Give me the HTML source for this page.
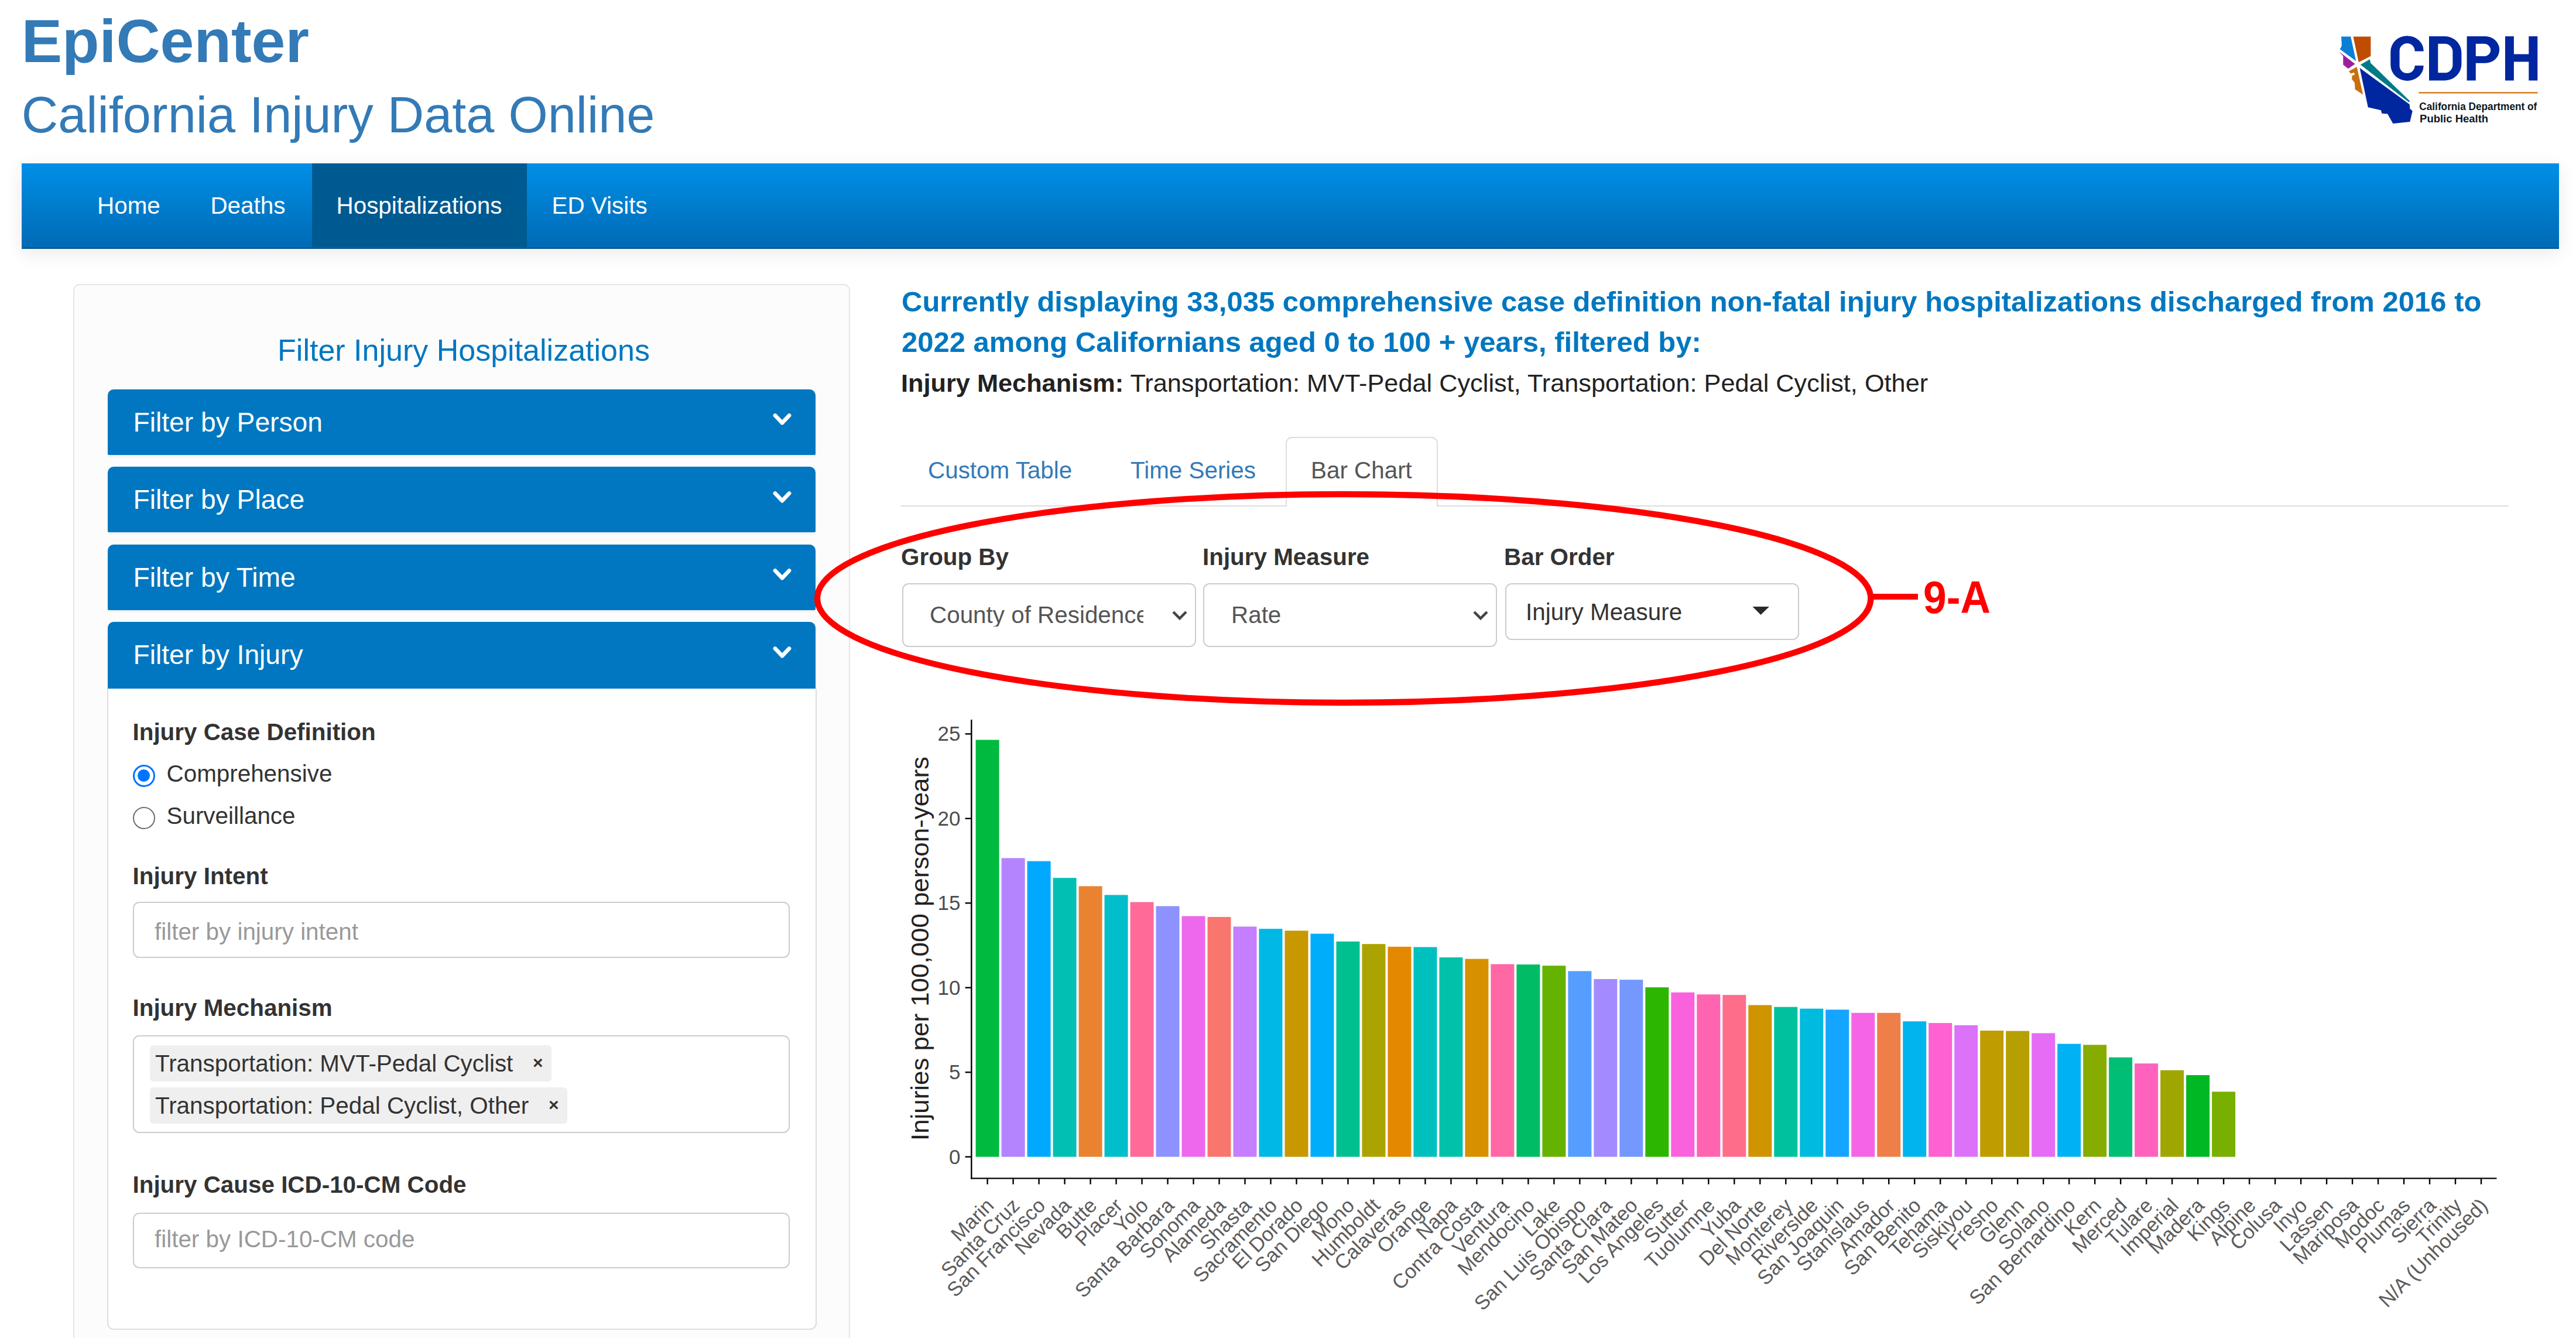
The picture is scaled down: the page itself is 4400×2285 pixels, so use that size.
<!DOCTYPE html>
<html><head><meta charset="utf-8"><title>EpiCenter</title>
<style>
html,body{margin:0;padding:0;background:#fff;width:4400px;height:2285px;overflow:hidden;position:relative;font-family:"Liberation Sans",sans-serif}
.abs{position:absolute}
.t{position:absolute;white-space:nowrap}
.navbar{background:linear-gradient(#008fe6,#006ab5);box-shadow:0 8px 30px rgba(0,0,0,.085);border-bottom:2.2px solid #00508c;box-sizing:border-box}
.ph{background:#0077c0;border-radius:10px 10px 2px 2px;box-shadow:0 3px 4px rgba(0,0,0,.06)}
.inp{background:#fff;border:2.5px solid #ccc;border-radius:11px;box-sizing:border-box}
</style></head><body>
<div class="t" style="left:36.7px;top:17.6px;font-size:104.00px;line-height:104.00px;color:#337ab7;font-weight:bold;">EpiCenter</div>
<div class="t" style="left:36.7px;top:153.0px;font-size:86.50px;line-height:86.50px;color:#337ab7;font-weight:normal;">California Injury Data Online</div>
<svg class="abs" style="left:3980px;top:50px" width="370" height="170" viewBox="3980 50 370 170">
<polygon points="3999,62.4 4015.2,62.4 4024.2,104.3 3996.7,84 3999.8,78.4 3999.5,70" fill="#0A7FD6"/>
<polygon points="4019.5,62.4 4049.4,62.4 4049.4,95.7 4028.8,106.2" fill="#BF4C00"/>
<polygon points="3995.5,88.3 4022.6,109.3 4010.9,117.3 4002.3,110.5 4002.3,95.7" fill="#9C1FA0"/>
<polygon points="4012.1,121.6 4025.7,114.2 4036.2,161.7 4022.6,152.4 4022,141.3 4017.1,135.2 4017.7,129 4022,127.8 4021,124 4015,125.5" fill="#C8700F"/>
<polygon points="4031.9,110.5 4047.9,101.3 4049.1,107.4 4116.4,172.8 4114.5,174.6" fill="#007A87"/>
<polygon points="4030.6,116.1 4115.7,178.3 4116.4,185.8 4120.7,189.5 4116.4,208 4087.4,211 4078.1,194.4 4068.3,193.8 4067,188.2 4044.8,183.3" fill="#0026A0"/>
<path fill="#0026A0" fill-rule="evenodd" d="M4139.6,87.5 L4139.6,86 A28.1,25 0 0 0 4111.5,61.2 A28.2,27 0 0 0 4083.3,88 L4083.3,111 A28.2,27 0 0 0 4111.5,137.9 A28.1,25 0 0 0 4139.6,113 L4139.6,112 L4124.6,112 A13,12.5 0 0 1 4111.6,125 A13,12.5 0 0 1 4098.6,112 L4098.6,87 A13,13 0 0 1 4111.6,73.9 A13,13 0 0 1 4124.6,87.5 Z
M4149,62.1 L4176,62.1 A28.4,28 0 0 1 4204.4,90 L4204.4,109.5 A28.4,28 0 0 1 4176,137.4 L4149,137.4 Z M4164.3,74.8 L4176,74.8 A13.4,13.4 0 0 1 4189.4,88.2 L4189.4,111 A13.4,13.4 0 0 1 4176,124.3 L4164.3,124.3 Z
M4213.6,62.1 L4245,62.1 A24.2,22.85 0 0 1 4269.2,85 A24.2,22.85 0 0 1 4245,107.8 L4228.8,107.8 L4228.8,137.4 L4213.6,137.4 Z M4228.8,74.8 L4243,74.8 A11.2,10.6 0 0 1 4254.2,85.4 A11.2,10.6 0 0 1 4243,96 L4228.8,96 Z
M4279,62.1 h14.9 v30.5 h25.4 v-30.5 h15 v75.3 h-15 v-31.8 h-25.4 v31.8 h-14.9 Z"/>
<rect x="4131.2" y="157.2" width="203.7" height="2.2" rx="1" fill="#D0700E"/>
<text x="4132.3" y="187.8" font-family="Liberation Sans" font-weight="bold" font-size="17.5" fill="#0B1722" textLength="201" lengthAdjust="spacingAndGlyphs">California Department of</text>
<text x="4133.1" y="208.6" font-family="Liberation Sans" font-weight="bold" font-size="18.5" fill="#0B1722" textLength="117" lengthAdjust="spacingAndGlyphs">Public Health</text>
</svg>
<div class="abs navbar" style="left:37.3px;top:279px;width:4333.7px;height:146.4px"></div>
<div class="abs" style="left:533px;top:279px;width:367px;height:143px;background:#005a92"></div>
<div class="t" style="left:166.0px;top:330.9px;font-size:40.40px;line-height:40.40px;color:#fff;font-weight:normal;">Home</div>
<div class="t" style="left:359.4px;top:330.9px;font-size:40.40px;line-height:40.40px;color:#fff;font-weight:normal;">Deaths</div>
<div class="t" style="left:574.5px;top:330.9px;font-size:40.40px;line-height:40.40px;color:#fff;font-weight:normal;">Hospitalizations</div>
<div class="t" style="left:942.5px;top:330.9px;font-size:40.40px;line-height:40.40px;color:#fff;font-weight:normal;">ED Visits</div>
<div class="abs" style="left:125px;top:485px;width:1323px;height:1900px;background:#fcfcfc;border:2.5px solid #e6e6e6;border-radius:11px"></div>
<div class="t" style="left:129px;width:1326px;text-align:center;top:572.3px;font-size:52px;line-height:52px;color:#0077c0">Filter Injury Hospitalizations</div>
<div class="abs ph" style="left:184px;top:664.5px;width:1209px;height:112px;"></div>
<div class="t" style="left:227.5px;top:697.5px;font-size:46.20px;line-height:46.20px;color:#fff;font-weight:normal;">Filter by Person</div>
<svg class="abs" style="left:1319px;top:704.0px" width="34" height="24" viewBox="0 0 34 24"><polyline points="5,5.5 17,18.2 29,5.5" fill="none" stroke="#fff" stroke-width="6.8" stroke-linecap="round" stroke-linejoin="round"/></svg>
<div class="abs ph" style="left:184px;top:797.0px;width:1209px;height:112px;"></div>
<div class="t" style="left:227.5px;top:830.0px;font-size:46.20px;line-height:46.20px;color:#fff;font-weight:normal;">Filter by Place</div>
<svg class="abs" style="left:1319px;top:836.5px" width="34" height="24" viewBox="0 0 34 24"><polyline points="5,5.5 17,18.2 29,5.5" fill="none" stroke="#fff" stroke-width="6.8" stroke-linecap="round" stroke-linejoin="round"/></svg>
<div class="abs ph" style="left:184px;top:929.5px;width:1209px;height:112px;"></div>
<div class="t" style="left:227.5px;top:962.5px;font-size:46.20px;line-height:46.20px;color:#fff;font-weight:normal;">Filter by Time</div>
<svg class="abs" style="left:1319px;top:969.0px" width="34" height="24" viewBox="0 0 34 24"><polyline points="5,5.5 17,18.2 29,5.5" fill="none" stroke="#fff" stroke-width="6.8" stroke-linecap="round" stroke-linejoin="round"/></svg>
<div class="abs ph" style="left:184px;top:1062.0px;width:1209px;height:117.5px;border-radius:10px 10px 0 0"></div>
<div class="t" style="left:227.5px;top:1095.0px;font-size:46.20px;line-height:46.20px;color:#fff;font-weight:normal;">Filter by Injury</div>
<svg class="abs" style="left:1319px;top:1101.5px" width="34" height="24" viewBox="0 0 34 24"><polyline points="5,5.5 17,18.2 29,5.5" fill="none" stroke="#fff" stroke-width="6.8" stroke-linecap="round" stroke-linejoin="round"/></svg>
<div class="abs" style="left:183px;top:1176px;width:1208px;height:1093px;background:#fff;border:2.5px solid #ddd;border-top:none;border-radius:0 0 11px 11px"></div>
<div class="t" style="left:226.5px;top:1230.2px;font-size:40.40px;line-height:40.40px;color:#333;font-weight:bold;">Injury Case Definition</div>
<div class="abs" style="left:226.6px;top:1305.8px;width:38px;height:38px;border-radius:50%;border:3px solid #0075ff;box-sizing:border-box;background:#fff"></div><div class="abs" style="left:235.1px;top:1314.3px;width:21px;height:21px;border-radius:50%;background:#0075ff"></div>
<div class="abs" style="left:226.6px;top:1377.8px;width:38px;height:38px;border-radius:50%;border:2.3px solid #6d6d6d;box-sizing:border-box;background:#fff"></div>
<div class="t" style="left:284.5px;top:1300.7px;font-size:40.40px;line-height:40.40px;color:#333;font-weight:normal;">Comprehensive</div>
<div class="t" style="left:284.5px;top:1372.7px;font-size:40.40px;line-height:40.40px;color:#333;font-weight:normal;">Surveillance</div>
<div class="t" style="left:226.5px;top:1475.7px;font-size:40.40px;line-height:40.40px;color:#333;font-weight:bold;">Injury Intent</div>
<div class="abs inp" style="left:227px;top:1540px;width:1122px;height:96px"></div>
<div class="t" style="left:264.0px;top:1570.7px;font-size:40.40px;line-height:40.40px;color:#999;font-weight:normal;">filter by injury intent</div>
<div class="t" style="left:226.5px;top:1700.7px;font-size:40.40px;line-height:40.40px;color:#333;font-weight:bold;">Injury Mechanism</div>
<div class="abs inp" style="left:227px;top:1768px;width:1122px;height:167px"></div>
<div class="abs" style="left:256px;top:1785px;width:686px;height:62px;background:#efefef;border-radius:6px"></div>
<div class="abs" style="left:256px;top:1857px;width:713px;height:62px;background:#efefef;border-radius:6px"></div>
<div class="t" style="left:265.0px;top:1795.7px;font-size:40.40px;line-height:40.40px;color:#333;font-weight:normal;">Transportation: MVT-Pedal Cyclist</div>
<div class="t" style="left:265.0px;top:1867.7px;font-size:40.40px;line-height:40.40px;color:#333;font-weight:normal;">Transportation: Pedal Cyclist, Other</div>
<div class="t" style="left:910.0px;top:1799.5px;font-size:30.00px;line-height:30.00px;color:#333;font-weight:bold;">×</div>
<div class="t" style="left:937.0px;top:1871.5px;font-size:30.00px;line-height:30.00px;color:#333;font-weight:bold;">×</div>
<div class="t" style="left:226.5px;top:2002.7px;font-size:40.40px;line-height:40.40px;color:#333;font-weight:bold;">Injury Cause ICD-10-CM Code</div>
<div class="abs inp" style="left:227px;top:2070.5px;width:1122px;height:95px"></div>
<div class="t" style="left:264.0px;top:2095.7px;font-size:40.40px;line-height:40.40px;color:#999;font-weight:normal;">filter by ICD-10-CM code</div>
<div class="t" style="left:1540.0px;top:490.6px;font-size:49.00px;line-height:49.00px;color:#0077c0;font-weight:bold;">Currently displaying 33,035 comprehensive case definition non-fatal injury hospitalizations discharged from 2016 to</div>
<div class="t" style="left:1540.0px;top:560.4px;font-size:49.00px;line-height:49.00px;color:#0077c0;font-weight:bold;">2022 among Californians aged 0 to 100 + years, filtered by:</div>
<div class="t" style="left:1539.0px;top:633.2px;font-size:43.30px;line-height:43.30px;color:#222;font-weight:normal;"><b>Injury Mechanism:</b> Transportation: MVT-Pedal Cyclist, Transportation: Pedal Cyclist, Other</div>
<div class="abs" style="left:1539px;top:862.5px;width:2746px;height:2.7px;background:#ddd"></div>
<div class="abs" style="left:2196px;top:746px;width:260px;height:119px;background:#fff;border:2.6px solid #ddd;border-bottom:none;border-radius:11px 11px 0 0;box-sizing:border-box"></div>
<div class="t" style="left:1585.0px;top:782.7px;font-size:40.40px;line-height:40.40px;color:#337ab7;font-weight:normal;">Custom Table</div>
<div class="t" style="left:1931.0px;top:782.7px;font-size:40.40px;line-height:40.40px;color:#337ab7;font-weight:normal;">Time Series</div>
<div class="t" style="left:2239.0px;top:782.7px;font-size:40.40px;line-height:40.40px;color:#555;font-weight:normal;">Bar Chart</div>
<div class="t" style="left:1539.0px;top:930.7px;font-size:40.40px;line-height:40.40px;color:#333;font-weight:bold;">Group By</div>
<div class="t" style="left:2054.0px;top:930.7px;font-size:40.40px;line-height:40.40px;color:#333;font-weight:bold;">Injury Measure</div>
<div class="t" style="left:2569.0px;top:930.7px;font-size:40.40px;line-height:40.40px;color:#333;font-weight:bold;">Bar Order</div>
<div class="abs inp" style="left:1541px;top:996px;width:501.5px;height:108.5px"></div>
<div class="abs inp" style="left:2055px;top:996px;width:502px;height:108.5px"></div>
<div class="abs inp" style="left:2571px;top:996px;width:502px;height:96.5px"></div>
<div class="t" style="left:1588px;top:1030px;width:365px;overflow:hidden;font-size:40.4px;line-height:40.4px;color:#555">County of Residence</div>
<div class="t" style="left:2103.0px;top:1030.3px;font-size:40.40px;line-height:40.40px;color:#555;font-weight:normal;">Rate</div>
<div class="t" style="left:2606.0px;top:1024.7px;font-size:40.40px;line-height:40.40px;color:#333;font-weight:normal;">Injury Measure</div>
<svg class="abs" style="left:2001px;top:1041px" width="28" height="20" viewBox="0 0 28 20"><polyline points="3,4 14,15 25,4" fill="none" stroke="#444" stroke-width="4.5"/></svg>
<svg class="abs" style="left:2515px;top:1041px" width="28" height="20" viewBox="0 0 28 20"><polyline points="3,4 14,15 25,4" fill="none" stroke="#444" stroke-width="4.5"/></svg>
<svg class="abs" style="left:2992px;top:1034px" width="32" height="20"><polygon points="1.5,2 30,2 15.5,16" fill="#2a2a2a"/></svg>
<svg class="abs" style="left:0;top:0" width="4400" height="2285"><rect x="1666.60" y="1263.51" width="40.0" height="712.09" fill="#00BA40"/><rect x="1710.59" y="1465.44" width="40.0" height="510.16" fill="#B484FF"/><rect x="1754.58" y="1470.64" width="40.0" height="504.96" fill="#00A9FF"/><rect x="1798.57" y="1499.24" width="40.0" height="476.36" fill="#00C0B4"/><rect x="1842.56" y="1513.39" width="40.0" height="462.21" fill="#EA8330"/><rect x="1886.55" y="1528.41" width="40.0" height="447.19" fill="#00BECA"/><rect x="1930.54" y="1540.55" width="40.0" height="435.05" fill="#FF6A98"/><rect x="1974.53" y="1547.48" width="40.0" height="428.12" fill="#8E92FF"/><rect x="2018.52" y="1564.52" width="40.0" height="411.08" fill="#ED68ED"/><rect x="2062.51" y="1565.97" width="40.0" height="409.63" fill="#F8766D"/><rect x="2106.50" y="1582.43" width="40.0" height="393.17" fill="#C47EFF"/><rect x="2150.49" y="1586.19" width="40.0" height="389.41" fill="#00B8E5"/><rect x="2194.48" y="1589.37" width="40.0" height="386.23" fill="#C89800"/><rect x="2238.47" y="1594.57" width="40.0" height="381.03" fill="#00ADFA"/><rect x="2282.46" y="1607.86" width="40.0" height="367.74" fill="#00C090"/><rect x="2326.45" y="1612.19" width="40.0" height="363.41" fill="#ABA300"/><rect x="2370.44" y="1616.81" width="40.0" height="358.79" fill="#E48800"/><rect x="2414.43" y="1617.39" width="40.0" height="358.21" fill="#00C0BF"/><rect x="2458.42" y="1635.01" width="40.0" height="340.59" fill="#00C1A9"/><rect x="2502.41" y="1637.61" width="40.0" height="337.99" fill="#D79000"/><rect x="2546.40" y="1646.57" width="40.0" height="329.03" fill="#FF67A5"/><rect x="2590.39" y="1647.14" width="40.0" height="328.46" fill="#00BD65"/><rect x="2634.38" y="1649.17" width="40.0" height="326.43" fill="#66B200"/><rect x="2678.37" y="1658.41" width="40.0" height="317.19" fill="#559EFF"/><rect x="2722.36" y="1671.99" width="40.0" height="303.61" fill="#A38BFF"/><rect x="2766.35" y="1673.14" width="40.0" height="302.46" fill="#7598FF"/><rect x="2810.34" y="1686.14" width="40.0" height="289.46" fill="#2DB600"/><rect x="2854.33" y="1694.81" width="40.0" height="280.79" fill="#F962DC"/><rect x="2898.32" y="1698.28" width="40.0" height="277.32" fill="#FF64B1"/><rect x="2942.31" y="1699.14" width="40.0" height="276.46" fill="#FE6E8B"/><rect x="2986.30" y="1716.47" width="40.0" height="259.13" fill="#D09400"/><rect x="3030.29" y="1719.65" width="40.0" height="255.95" fill="#00C19D"/><rect x="3074.28" y="1722.54" width="40.0" height="253.06" fill="#00BBDD"/><rect x="3118.27" y="1724.27" width="40.0" height="251.33" fill="#15A4FF"/><rect x="3162.26" y="1729.76" width="40.0" height="245.84" fill="#F464E5"/><rect x="3206.25" y="1729.76" width="40.0" height="245.84" fill="#EF7F49"/><rect x="3250.24" y="1744.21" width="40.0" height="231.39" fill="#00B5ED"/><rect x="3294.23" y="1747.10" width="40.0" height="228.50" fill="#FD61D2"/><rect x="3338.22" y="1750.85" width="40.0" height="224.75" fill="#DC71FA"/><rect x="3382.21" y="1760.10" width="40.0" height="215.50" fill="#BF9C00"/><rect x="3426.20" y="1760.67" width="40.0" height="214.93" fill="#B69F00"/><rect x="3470.19" y="1764.43" width="40.0" height="211.17" fill="#E56CF4"/><rect x="3514.18" y="1782.63" width="40.0" height="192.97" fill="#00B2F4"/><rect x="3558.17" y="1784.36" width="40.0" height="191.24" fill="#87AC00"/><rect x="3602.16" y="1805.74" width="40.0" height="169.86" fill="#00BF75"/><rect x="3646.15" y="1816.14" width="40.0" height="159.46" fill="#FF62BD"/><rect x="3690.14" y="1827.69" width="40.0" height="147.91" fill="#A0A600"/><rect x="3734.13" y="1836.07" width="40.0" height="139.53" fill="#00B824"/><rect x="3778.12" y="1864.38" width="40.0" height="111.22" fill="#78AF00"/><line x1="1659.3" y1="1229" x2="1659.3" y2="2013.5" stroke="#000" stroke-width="2.4"/><line x1="1658.1" y1="2012.4" x2="4264.5" y2="2012.4" stroke="#000" stroke-width="2.4"/><line x1="1648.6" y1="1975.60" x2="1659" y2="1975.60" stroke="#000" stroke-width="2.4"/><text x="1640.5" y="1987.60" text-anchor="end" font-size="35" fill="#4d4d4d" font-family="Liberation Sans">0</text><line x1="1648.6" y1="1831.16" x2="1659" y2="1831.16" stroke="#000" stroke-width="2.4"/><text x="1640.5" y="1843.16" text-anchor="end" font-size="35" fill="#4d4d4d" font-family="Liberation Sans">5</text><line x1="1648.6" y1="1686.72" x2="1659" y2="1686.72" stroke="#000" stroke-width="2.4"/><text x="1640.5" y="1698.72" text-anchor="end" font-size="35" fill="#4d4d4d" font-family="Liberation Sans">10</text><line x1="1648.6" y1="1542.28" x2="1659" y2="1542.28" stroke="#000" stroke-width="2.4"/><text x="1640.5" y="1554.28" text-anchor="end" font-size="35" fill="#4d4d4d" font-family="Liberation Sans">15</text><line x1="1648.6" y1="1397.84" x2="1659" y2="1397.84" stroke="#000" stroke-width="2.4"/><text x="1640.5" y="1409.84" text-anchor="end" font-size="35" fill="#4d4d4d" font-family="Liberation Sans">20</text><line x1="1648.6" y1="1253.40" x2="1659" y2="1253.40" stroke="#000" stroke-width="2.4"/><text x="1640.5" y="1265.40" text-anchor="end" font-size="35" fill="#4d4d4d" font-family="Liberation Sans">25</text><line x1="1686.60" y1="2012" x2="1686.60" y2="2022.5" stroke="#000" stroke-width="2.4"/><text transform="translate(1699.60,2061) rotate(-45)" text-anchor="end" font-size="34.5" fill="#5c5c5c" font-family="Liberation Sans">Marin</text><line x1="1730.59" y1="2012" x2="1730.59" y2="2022.5" stroke="#000" stroke-width="2.4"/><text transform="translate(1743.59,2061) rotate(-45)" text-anchor="end" font-size="34.5" fill="#5c5c5c" font-family="Liberation Sans">Santa Cruz</text><line x1="1774.58" y1="2012" x2="1774.58" y2="2022.5" stroke="#000" stroke-width="2.4"/><text transform="translate(1787.58,2061) rotate(-45)" text-anchor="end" font-size="34.5" fill="#5c5c5c" font-family="Liberation Sans">San Francisco</text><line x1="1818.57" y1="2012" x2="1818.57" y2="2022.5" stroke="#000" stroke-width="2.4"/><text transform="translate(1831.57,2061) rotate(-45)" text-anchor="end" font-size="34.5" fill="#5c5c5c" font-family="Liberation Sans">Nevada</text><line x1="1862.56" y1="2012" x2="1862.56" y2="2022.5" stroke="#000" stroke-width="2.4"/><text transform="translate(1875.56,2061) rotate(-45)" text-anchor="end" font-size="34.5" fill="#5c5c5c" font-family="Liberation Sans">Butte</text><line x1="1906.55" y1="2012" x2="1906.55" y2="2022.5" stroke="#000" stroke-width="2.4"/><text transform="translate(1919.55,2061) rotate(-45)" text-anchor="end" font-size="34.5" fill="#5c5c5c" font-family="Liberation Sans">Placer</text><line x1="1950.54" y1="2012" x2="1950.54" y2="2022.5" stroke="#000" stroke-width="2.4"/><text transform="translate(1963.54,2061) rotate(-45)" text-anchor="end" font-size="34.5" fill="#5c5c5c" font-family="Liberation Sans">Yolo</text><line x1="1994.53" y1="2012" x2="1994.53" y2="2022.5" stroke="#000" stroke-width="2.4"/><text transform="translate(2007.53,2061) rotate(-45)" text-anchor="end" font-size="34.5" fill="#5c5c5c" font-family="Liberation Sans">Santa Barbara</text><line x1="2038.52" y1="2012" x2="2038.52" y2="2022.5" stroke="#000" stroke-width="2.4"/><text transform="translate(2051.52,2061) rotate(-45)" text-anchor="end" font-size="34.5" fill="#5c5c5c" font-family="Liberation Sans">Sonoma</text><line x1="2082.51" y1="2012" x2="2082.51" y2="2022.5" stroke="#000" stroke-width="2.4"/><text transform="translate(2095.51,2061) rotate(-45)" text-anchor="end" font-size="34.5" fill="#5c5c5c" font-family="Liberation Sans">Alameda</text><line x1="2126.50" y1="2012" x2="2126.50" y2="2022.5" stroke="#000" stroke-width="2.4"/><text transform="translate(2139.50,2061) rotate(-45)" text-anchor="end" font-size="34.5" fill="#5c5c5c" font-family="Liberation Sans">Shasta</text><line x1="2170.49" y1="2012" x2="2170.49" y2="2022.5" stroke="#000" stroke-width="2.4"/><text transform="translate(2183.49,2061) rotate(-45)" text-anchor="end" font-size="34.5" fill="#5c5c5c" font-family="Liberation Sans">Sacramento</text><line x1="2214.48" y1="2012" x2="2214.48" y2="2022.5" stroke="#000" stroke-width="2.4"/><text transform="translate(2227.48,2061) rotate(-45)" text-anchor="end" font-size="34.5" fill="#5c5c5c" font-family="Liberation Sans">El Dorado</text><line x1="2258.47" y1="2012" x2="2258.47" y2="2022.5" stroke="#000" stroke-width="2.4"/><text transform="translate(2271.47,2061) rotate(-45)" text-anchor="end" font-size="34.5" fill="#5c5c5c" font-family="Liberation Sans">San Diego</text><line x1="2302.46" y1="2012" x2="2302.46" y2="2022.5" stroke="#000" stroke-width="2.4"/><text transform="translate(2315.46,2061) rotate(-45)" text-anchor="end" font-size="34.5" fill="#5c5c5c" font-family="Liberation Sans">Mono</text><line x1="2346.45" y1="2012" x2="2346.45" y2="2022.5" stroke="#000" stroke-width="2.4"/><text transform="translate(2359.45,2061) rotate(-45)" text-anchor="end" font-size="34.5" fill="#5c5c5c" font-family="Liberation Sans">Humboldt</text><line x1="2390.44" y1="2012" x2="2390.44" y2="2022.5" stroke="#000" stroke-width="2.4"/><text transform="translate(2403.44,2061) rotate(-45)" text-anchor="end" font-size="34.5" fill="#5c5c5c" font-family="Liberation Sans">Calaveras</text><line x1="2434.43" y1="2012" x2="2434.43" y2="2022.5" stroke="#000" stroke-width="2.4"/><text transform="translate(2447.43,2061) rotate(-45)" text-anchor="end" font-size="34.5" fill="#5c5c5c" font-family="Liberation Sans">Orange</text><line x1="2478.42" y1="2012" x2="2478.42" y2="2022.5" stroke="#000" stroke-width="2.4"/><text transform="translate(2491.42,2061) rotate(-45)" text-anchor="end" font-size="34.5" fill="#5c5c5c" font-family="Liberation Sans">Napa</text><line x1="2522.41" y1="2012" x2="2522.41" y2="2022.5" stroke="#000" stroke-width="2.4"/><text transform="translate(2535.41,2061) rotate(-45)" text-anchor="end" font-size="34.5" fill="#5c5c5c" font-family="Liberation Sans">Contra Costa</text><line x1="2566.40" y1="2012" x2="2566.40" y2="2022.5" stroke="#000" stroke-width="2.4"/><text transform="translate(2579.40,2061) rotate(-45)" text-anchor="end" font-size="34.5" fill="#5c5c5c" font-family="Liberation Sans">Ventura</text><line x1="2610.39" y1="2012" x2="2610.39" y2="2022.5" stroke="#000" stroke-width="2.4"/><text transform="translate(2623.39,2061) rotate(-45)" text-anchor="end" font-size="34.5" fill="#5c5c5c" font-family="Liberation Sans">Mendocino</text><line x1="2654.38" y1="2012" x2="2654.38" y2="2022.5" stroke="#000" stroke-width="2.4"/><text transform="translate(2667.38,2061) rotate(-45)" text-anchor="end" font-size="34.5" fill="#5c5c5c" font-family="Liberation Sans">Lake</text><line x1="2698.37" y1="2012" x2="2698.37" y2="2022.5" stroke="#000" stroke-width="2.4"/><text transform="translate(2711.37,2061) rotate(-45)" text-anchor="end" font-size="34.5" fill="#5c5c5c" font-family="Liberation Sans">San Luis Obispo</text><line x1="2742.36" y1="2012" x2="2742.36" y2="2022.5" stroke="#000" stroke-width="2.4"/><text transform="translate(2755.36,2061) rotate(-45)" text-anchor="end" font-size="34.5" fill="#5c5c5c" font-family="Liberation Sans">Santa Clara</text><line x1="2786.35" y1="2012" x2="2786.35" y2="2022.5" stroke="#000" stroke-width="2.4"/><text transform="translate(2799.35,2061) rotate(-45)" text-anchor="end" font-size="34.5" fill="#5c5c5c" font-family="Liberation Sans">San Mateo</text><line x1="2830.34" y1="2012" x2="2830.34" y2="2022.5" stroke="#000" stroke-width="2.4"/><text transform="translate(2843.34,2061) rotate(-45)" text-anchor="end" font-size="34.5" fill="#5c5c5c" font-family="Liberation Sans">Los Angeles</text><line x1="2874.33" y1="2012" x2="2874.33" y2="2022.5" stroke="#000" stroke-width="2.4"/><text transform="translate(2887.33,2061) rotate(-45)" text-anchor="end" font-size="34.5" fill="#5c5c5c" font-family="Liberation Sans">Sutter</text><line x1="2918.32" y1="2012" x2="2918.32" y2="2022.5" stroke="#000" stroke-width="2.4"/><text transform="translate(2931.32,2061) rotate(-45)" text-anchor="end" font-size="34.5" fill="#5c5c5c" font-family="Liberation Sans">Tuolumne</text><line x1="2962.31" y1="2012" x2="2962.31" y2="2022.5" stroke="#000" stroke-width="2.4"/><text transform="translate(2975.31,2061) rotate(-45)" text-anchor="end" font-size="34.5" fill="#5c5c5c" font-family="Liberation Sans">Yuba</text><line x1="3006.30" y1="2012" x2="3006.30" y2="2022.5" stroke="#000" stroke-width="2.4"/><text transform="translate(3019.30,2061) rotate(-45)" text-anchor="end" font-size="34.5" fill="#5c5c5c" font-family="Liberation Sans">Del Norte</text><line x1="3050.29" y1="2012" x2="3050.29" y2="2022.5" stroke="#000" stroke-width="2.4"/><text transform="translate(3063.29,2061) rotate(-45)" text-anchor="end" font-size="34.5" fill="#5c5c5c" font-family="Liberation Sans">Monterey</text><line x1="3094.28" y1="2012" x2="3094.28" y2="2022.5" stroke="#000" stroke-width="2.4"/><text transform="translate(3107.28,2061) rotate(-45)" text-anchor="end" font-size="34.5" fill="#5c5c5c" font-family="Liberation Sans">Riverside</text><line x1="3138.27" y1="2012" x2="3138.27" y2="2022.5" stroke="#000" stroke-width="2.4"/><text transform="translate(3151.27,2061) rotate(-45)" text-anchor="end" font-size="34.5" fill="#5c5c5c" font-family="Liberation Sans">San Joaquin</text><line x1="3182.26" y1="2012" x2="3182.26" y2="2022.5" stroke="#000" stroke-width="2.4"/><text transform="translate(3195.26,2061) rotate(-45)" text-anchor="end" font-size="34.5" fill="#5c5c5c" font-family="Liberation Sans">Stanislaus</text><line x1="3226.25" y1="2012" x2="3226.25" y2="2022.5" stroke="#000" stroke-width="2.4"/><text transform="translate(3239.25,2061) rotate(-45)" text-anchor="end" font-size="34.5" fill="#5c5c5c" font-family="Liberation Sans">Amador</text><line x1="3270.24" y1="2012" x2="3270.24" y2="2022.5" stroke="#000" stroke-width="2.4"/><text transform="translate(3283.24,2061) rotate(-45)" text-anchor="end" font-size="34.5" fill="#5c5c5c" font-family="Liberation Sans">San Benito</text><line x1="3314.23" y1="2012" x2="3314.23" y2="2022.5" stroke="#000" stroke-width="2.4"/><text transform="translate(3327.23,2061) rotate(-45)" text-anchor="end" font-size="34.5" fill="#5c5c5c" font-family="Liberation Sans">Tehama</text><line x1="3358.22" y1="2012" x2="3358.22" y2="2022.5" stroke="#000" stroke-width="2.4"/><text transform="translate(3371.22,2061) rotate(-45)" text-anchor="end" font-size="34.5" fill="#5c5c5c" font-family="Liberation Sans">Siskiyou</text><line x1="3402.21" y1="2012" x2="3402.21" y2="2022.5" stroke="#000" stroke-width="2.4"/><text transform="translate(3415.21,2061) rotate(-45)" text-anchor="end" font-size="34.5" fill="#5c5c5c" font-family="Liberation Sans">Fresno</text><line x1="3446.20" y1="2012" x2="3446.20" y2="2022.5" stroke="#000" stroke-width="2.4"/><text transform="translate(3459.20,2061) rotate(-45)" text-anchor="end" font-size="34.5" fill="#5c5c5c" font-family="Liberation Sans">Glenn</text><line x1="3490.19" y1="2012" x2="3490.19" y2="2022.5" stroke="#000" stroke-width="2.4"/><text transform="translate(3503.19,2061) rotate(-45)" text-anchor="end" font-size="34.5" fill="#5c5c5c" font-family="Liberation Sans">Solano</text><line x1="3534.18" y1="2012" x2="3534.18" y2="2022.5" stroke="#000" stroke-width="2.4"/><text transform="translate(3547.18,2061) rotate(-45)" text-anchor="end" font-size="34.5" fill="#5c5c5c" font-family="Liberation Sans">San Bernardino</text><line x1="3578.17" y1="2012" x2="3578.17" y2="2022.5" stroke="#000" stroke-width="2.4"/><text transform="translate(3591.17,2061) rotate(-45)" text-anchor="end" font-size="34.5" fill="#5c5c5c" font-family="Liberation Sans">Kern</text><line x1="3622.16" y1="2012" x2="3622.16" y2="2022.5" stroke="#000" stroke-width="2.4"/><text transform="translate(3635.16,2061) rotate(-45)" text-anchor="end" font-size="34.5" fill="#5c5c5c" font-family="Liberation Sans">Merced</text><line x1="3666.15" y1="2012" x2="3666.15" y2="2022.5" stroke="#000" stroke-width="2.4"/><text transform="translate(3679.15,2061) rotate(-45)" text-anchor="end" font-size="34.5" fill="#5c5c5c" font-family="Liberation Sans">Tulare</text><line x1="3710.14" y1="2012" x2="3710.14" y2="2022.5" stroke="#000" stroke-width="2.4"/><text transform="translate(3723.14,2061) rotate(-45)" text-anchor="end" font-size="34.5" fill="#5c5c5c" font-family="Liberation Sans">Imperial</text><line x1="3754.13" y1="2012" x2="3754.13" y2="2022.5" stroke="#000" stroke-width="2.4"/><text transform="translate(3767.13,2061) rotate(-45)" text-anchor="end" font-size="34.5" fill="#5c5c5c" font-family="Liberation Sans">Madera</text><line x1="3798.12" y1="2012" x2="3798.12" y2="2022.5" stroke="#000" stroke-width="2.4"/><text transform="translate(3811.12,2061) rotate(-45)" text-anchor="end" font-size="34.5" fill="#5c5c5c" font-family="Liberation Sans">Kings</text><line x1="3842.11" y1="2012" x2="3842.11" y2="2022.5" stroke="#000" stroke-width="2.4"/><text transform="translate(3855.11,2061) rotate(-45)" text-anchor="end" font-size="34.5" fill="#5c5c5c" font-family="Liberation Sans">Alpine</text><line x1="3886.10" y1="2012" x2="3886.10" y2="2022.5" stroke="#000" stroke-width="2.4"/><text transform="translate(3899.10,2061) rotate(-45)" text-anchor="end" font-size="34.5" fill="#5c5c5c" font-family="Liberation Sans">Colusa</text><line x1="3930.09" y1="2012" x2="3930.09" y2="2022.5" stroke="#000" stroke-width="2.4"/><text transform="translate(3943.09,2061) rotate(-45)" text-anchor="end" font-size="34.5" fill="#5c5c5c" font-family="Liberation Sans">Inyo</text><line x1="3974.08" y1="2012" x2="3974.08" y2="2022.5" stroke="#000" stroke-width="2.4"/><text transform="translate(3987.08,2061) rotate(-45)" text-anchor="end" font-size="34.5" fill="#5c5c5c" font-family="Liberation Sans">Lassen</text><line x1="4018.07" y1="2012" x2="4018.07" y2="2022.5" stroke="#000" stroke-width="2.4"/><text transform="translate(4031.07,2061) rotate(-45)" text-anchor="end" font-size="34.5" fill="#5c5c5c" font-family="Liberation Sans">Mariposa</text><line x1="4062.06" y1="2012" x2="4062.06" y2="2022.5" stroke="#000" stroke-width="2.4"/><text transform="translate(4075.06,2061) rotate(-45)" text-anchor="end" font-size="34.5" fill="#5c5c5c" font-family="Liberation Sans">Modoc</text><line x1="4106.05" y1="2012" x2="4106.05" y2="2022.5" stroke="#000" stroke-width="2.4"/><text transform="translate(4119.05,2061) rotate(-45)" text-anchor="end" font-size="34.5" fill="#5c5c5c" font-family="Liberation Sans">Plumas</text><line x1="4150.04" y1="2012" x2="4150.04" y2="2022.5" stroke="#000" stroke-width="2.4"/><text transform="translate(4163.04,2061) rotate(-45)" text-anchor="end" font-size="34.5" fill="#5c5c5c" font-family="Liberation Sans">Sierra</text><line x1="4194.03" y1="2012" x2="4194.03" y2="2022.5" stroke="#000" stroke-width="2.4"/><text transform="translate(4207.03,2061) rotate(-45)" text-anchor="end" font-size="34.5" fill="#5c5c5c" font-family="Liberation Sans">Trinity</text><line x1="4238.02" y1="2012" x2="4238.02" y2="2022.5" stroke="#000" stroke-width="2.4"/><text transform="translate(4251.02,2061) rotate(-45)" text-anchor="end" font-size="34.5" fill="#5c5c5c" font-family="Liberation Sans">N/A (Unhoused)</text><text transform="translate(1586,1620) rotate(-90)" text-anchor="middle" font-size="42.3" textLength="656" lengthAdjust="spacingAndGlyphs" fill="#222" font-family="Liberation Sans">Injuries per 100,000 person-years</text><ellipse cx="2295.7" cy="1022" rx="899.7" ry="178" fill="none" stroke="#ff0000" stroke-width="10.3"/><rect x="3196" y="1014" width="80" height="10" fill="#ff0000"/><text x="3285" y="1046.5" font-size="78" font-weight="bold" fill="#ff0000" font-family="Liberation Sans" textLength="115" lengthAdjust="spacingAndGlyphs">9-A</text></svg>
</body></html>
